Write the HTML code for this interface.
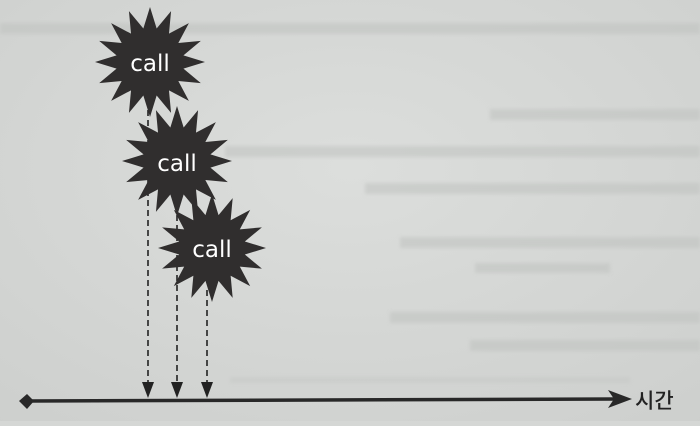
<!DOCTYPE html>
<html><head><meta charset="utf-8"><style>
html,body{margin:0;padding:0}
body{width:700px;height:421px;overflow:hidden;background:#d5d7d5;font-family:"Liberation Sans","Noto Sans CJK KR",sans-serif}
</style></head><body>
<svg width="700" height="421" viewBox="0 0 700 421" xmlns="http://www.w3.org/2000/svg">
<defs>
<filter id="b"><feGaussianBlur stdDeviation="1.8"/></filter>
<radialGradient id="g" cx="0.5" cy="0.4" r="0.8"><stop offset="0" stop-color="#dcdedc"/><stop offset="1" stop-color="#cdcfcd"/></radialGradient>
<path id="star" d="M100,0 L60.8,12.1 L92.4,38.3 L51.5,34.5 L70.7,70.7 L34.5,51.5 L38.3,92.4 L12.1,60.8 L0,100 L-12.1,60.8 L-38.3,92.4 L-34.5,51.5 L-70.7,70.7 L-51.5,34.5 L-92.4,38.3 L-60.8,12.1 L-100,0 L-60.8,-12.1 L-92.4,-38.3 L-51.5,-34.5 L-70.7,-70.7 L-34.5,-51.5 L-38.3,-92.4 L-12.1,-60.8 L0,-100 L12.1,-60.8 L38.3,-92.4 L34.5,-51.5 L70.7,-70.7 L51.5,-34.5 L92.4,-38.3 L60.8,-12.1 Z" fill="#302e2e"/>
</defs>
<rect width="700" height="421" fill="url(#g)"/>
<g filter="url(#b)" fill="#c0c2c0" opacity="0.55">
<rect x="0" y="23" width="700" height="11"/>
<rect x="490" y="109" width="210" height="11"/>
<rect x="225" y="146" width="475" height="11"/>
<rect x="365" y="183" width="335" height="11"/>
<rect x="400" y="237" width="300" height="11"/>
<rect x="475" y="263" width="135" height="10"/>
<rect x="390" y="312" width="310" height="11"/>
<rect x="470" y="340" width="230" height="11"/>
<rect x="230" y="377" width="400" height="6" opacity="0.6"/>
</g>
<g stroke="#222" stroke-width="1.6" stroke-dasharray="6,4">
<line x1="148" y1="100" x2="148" y2="384"/>
<line x1="177" y1="195" x2="177" y2="384"/>
<line x1="207" y1="290" x2="207" y2="384"/>
</g>
<g fill="#222">
<polygon points="142,382 154,382 148,398"/>
<polygon points="171,382 183,382 177,398"/>
<polygon points="201,382 213,382 207,398"/>
</g>
<use href="#star" transform="translate(150,62) scale(0.55)"/>
<use href="#star" transform="translate(177,161) scale(0.55)"/>
<use href="#star" transform="translate(212,248) scale(0.54)"/>
<g fill="#fff" font-size="23" text-anchor="middle" font-family="'DejaVu Sans','Liberation Sans',sans-serif">
<text x="150" y="71">call</text>
<text x="177" y="171">call</text>
<text x="212" y="257">call</text>
</g>
<line x1="28" y1="401" x2="618" y2="399" stroke="#282828" stroke-width="3.5"/>
<polygon points="608,390 632,399 608,408 614,399" fill="#282828"/>
<polygon points="27,394 34,401 27,409 19,401" fill="#282828"/>
<text x="635" y="408" font-size="21" font-weight="500" fill="#222" font-family="'Noto Sans CJK KR',sans-serif">시간</text>
</svg>
</body></html>
